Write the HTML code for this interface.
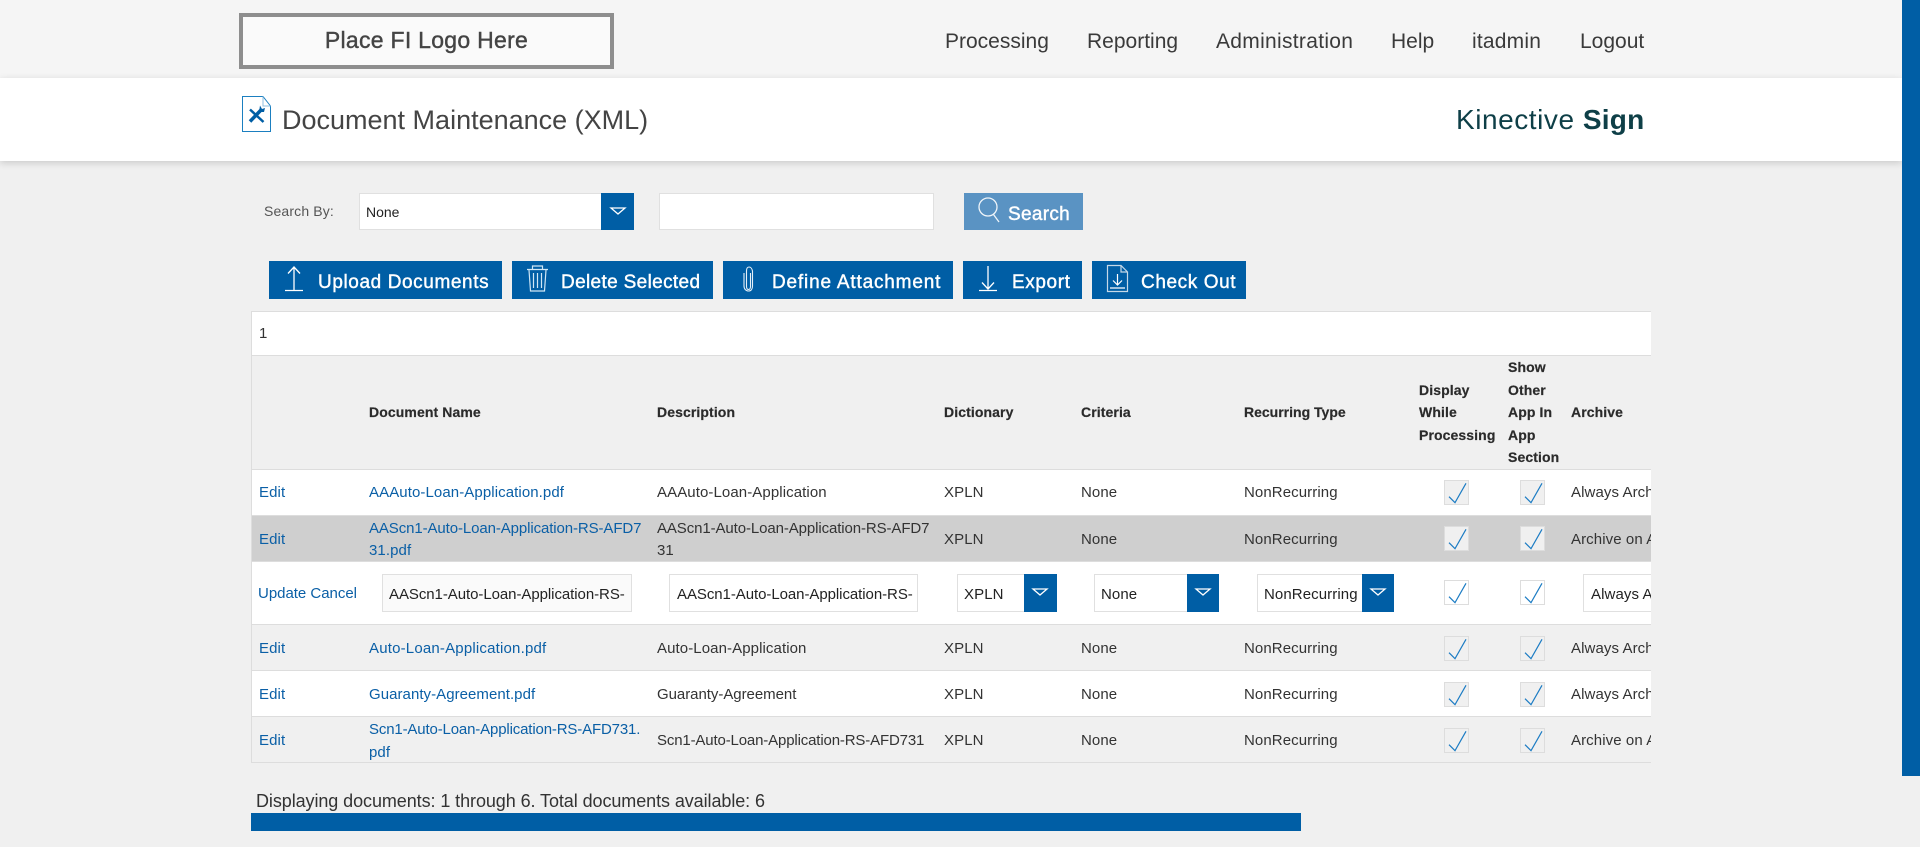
<!DOCTYPE html>
<html lang="en"><head><meta charset="utf-8"><title>Document Maintenance (XML)</title>
<style>
*{box-sizing:border-box}
html,body{margin:0;padding:0;width:1920px;height:847px;overflow:hidden;background:#f0f0f0;font-family:"Liberation Sans",Arial,sans-serif;color:#333}
.a{position:absolute}
.t{position:absolute;white-space:nowrap}
a{color:#0a5fa6;text-decoration:none}
#top{left:0;top:0;width:1902px;height:78px;background:#f5f5f5}
#sub{left:0;top:78px;width:1902px;height:83px;background:#fff;box-shadow:0 2px 7px rgba(0,0,0,.16)}
#sb{left:1902px;top:0;width:18px;height:776px;background:#005ea5}
#logo{left:239px;top:13px;width:375px;height:56px;border:4px solid #8e8e8e;background:#fafafa;text-align:center;line-height:47px;font-size:23px;letter-spacing:.28px;color:#444;-webkit-text-stroke:.4px #444}
.nav{top:30px;font-size:21px;line-height:24px;color:#3a3a3a}
.btn{position:absolute;top:261px;height:38px;background:#005ea5;color:#fff}
.btn span{position:absolute;top:0;line-height:44px;font-size:19px;white-space:nowrap;-webkit-text-stroke:.4px #fff;letter-spacing:.6px}
.btn svg,.ic{position:absolute;overflow:visible}
.inp{position:absolute;background:#fff;border:1px solid #e0e0e0;font-size:15px;color:#222;white-space:nowrap;overflow:hidden}
.ar{position:absolute;background:#005ea5}
#clip{left:0;top:0;width:1651px;height:847px;overflow:hidden}
.row{position:absolute;left:252px;width:1399px;font-size:15px;letter-spacing:.09px;color:#333}
.row .t{line-height:22px}
.c0{left:7px}.c1{left:117px}.c2{left:405px}.c3{left:692px}.c4{left:829px}.c5{left:992px}.c6{left:1319px}
.ln{position:absolute;left:251px;width:1400px;height:1px;background:#ddd}
.hd{font-weight:bold;font-size:14px;letter-spacing:.1px;color:#2b2b2b;-webkit-text-stroke:.2px #2b2b2b}
.cb{position:absolute;width:25px;height:25px;border:1px solid #ddd;background:#f0f0f0}
.cb.w{background:#fff}
.cb svg{position:absolute;left:-1px;top:-1px}
</style></head><body>

<div class="a" id="top"></div>
<div class="a" id="sub"></div>
<div class="a" id="sb"></div>
<div class="a" id="logo">Place FI Logo Here</div>
<span class="t nav" style="left:945px">Processing</span>
<span class="t nav" style="left:1087px">Reporting</span>
<span class="t nav" style="left:1216px;letter-spacing:.3px">Administration</span>
<span class="t nav" style="left:1391px">Help</span>
<span class="t nav" style="left:1472px;letter-spacing:.2px">itadmin</span>
<span class="t nav" style="left:1580px">Logout</span>

<svg class="ic" style="left:242px;top:96px" width="29" height="36" viewBox="0 0 29 36">
<path d="M.5.5H21L28.500 10V35.500H.5Z" fill="#fff" stroke="#1b7fc0" stroke-width="1"/>
<path d="M21 .5V10H28.500" fill="none" stroke="#8fbfe0" stroke-width="1"/>
<path d="M8 13.500L21.500 26" fill="none" stroke="#005ea5" stroke-width="2.500"/>
<path d="M8 25.500L19 14" fill="none" stroke="#005ea5" stroke-width="3.500"/>
<path d="M18 9.500L20 13L23 12L22 16L17 16Z" fill="#005ea5"/>
</svg>
<span class="t" style="left:282px;top:103px;font-size:27px;line-height:34px;color:#444">Document Maintenance (XML)</span>
<span class="t" style="left:1456px;top:103px;font-size:28px;line-height:34px;letter-spacing:.55px;color:#0e3f47">Kinective <b style="letter-spacing:.2px">Sign</b></span>

<span class="t" style="left:264px;top:201px;font-size:14px;line-height:20px;letter-spacing:.15px;color:#555">Search By:</span>
<div class="inp" style="left:359px;top:193px;width:275px;height:37px;padding-left:6px;font-size:14px;line-height:37px">None</div>
<div class="ar" style="left:601px;top:193px;width:33px;height:37px"><svg class="ic" style="left:9px;top:14px" width="16" height="8"><path d="M1 1H15L8 7Z" fill="none" stroke="#fff" stroke-width="1.300"/></svg></div>
<div class="inp" style="left:659px;top:193px;width:275px;height:37px"></div>
<div class="a" style="left:964px;top:193px;width:119px;height:37px;background:#5a93c3;color:#fff">
<svg class="ic" style="left:14px;top:4px" width="24" height="28" fill="none" stroke="#fff" stroke-width="1.300" opacity=".9"><circle cx="10" cy="10" r="9"/><path d="M15.500 17.500L21 25"/></svg>
<span class="t" style="left:44px;top:0;line-height:44px;font-size:19px;letter-spacing:.3px;-webkit-text-stroke:.4px #fff">Search</span></div>

<div class="btn" style="left:269px;width:233px">
<svg style="left:16px;top:5px" width="18" height="26" fill="none" stroke="#fff" stroke-width="1.300"><path d="M9 1V24M3 7.500L9 1L15 7.500M0 24.500H18"/></svg>
<span style="left:49px">Upload Documents</span></div>
<div class="btn" style="left:512px;width:201px">
<svg style="left:15px;top:4px" width="22" height="27" fill="none" stroke="#cfe6f5" stroke-width="1.200"><path d="M0 4.500H21M5.500 4V1H15.500V4M2 5L3.500 26H17.500L19 5M6.500 8V23M10.500 8V23M14.500 8V23"/></svg>
<span style="left:49px;letter-spacing:.35px">Delete Selected</span></div>
<div class="btn" style="left:723px;width:230px">
<svg style="left:20px;top:5px" width="11" height="26" fill="none" stroke="#e6f1f9" stroke-width="1.100"><path d="M7.500 7V20.500C7.500 22.500 6.500 23.500 5.500 23.500S3.500 22.500 3.500 20.500V5C3.500 2.500 4.500 1 6 1S9 2.500 9.500 5V20C9.500 23 8 25 5.500 25S1 23 1 20V7"/></svg>
<span style="left:49px;letter-spacing:.82px">Define Attachment</span></div>
<div class="btn" style="left:963px;width:119px">
<svg style="left:16px;top:5px" width="18" height="26" fill="none" stroke="#fff" stroke-width="1.300"><path d="M9 0V23M3 16.500L9 23L15 16.500M0 24.500H18"/></svg>
<span style="left:49px">Export</span></div>
<div class="btn" style="left:1092px;width:154px">
<svg style="left:15px;top:4px" width="21" height="27" fill="none" stroke="#fff" stroke-width="1.200"><path d="M.5.500H14L20.500 7V26.500H.5Z" stroke="#c4d8e8"/><path d="M14 .5V7H20.500" stroke="#c4d8e8"/><path d="M10.500 9V20M6 15.500L10.500 20L15 15.500M3 23H18"/></svg>
<span style="left:49px">Check Out</span></div>

<div class="a" id="clip">
<div class="a" style="left:251px;top:311px;width:1400px;height:44px;background:#fff"></div>
<div class="a" style="left:251px;top:355px;width:1400px;height:114px;background:#f0f0f0"></div>
<div class="ln" style="top:311px"></div>
<div class="ln" style="top:355px"></div>
<div class="ln" style="top:469px"></div>
<div class="ln" style="top:515px"></div>
<div class="ln" style="top:561px"></div>
<div class="ln" style="top:624px"></div>
<div class="ln" style="top:670px"></div>
<div class="ln" style="top:716px"></div>
<div class="ln" style="top:762px"></div>
<div class="a" style="left:251px;top:311px;width:1px;height:452px;background:#ddd"></div>

<span class="t" style="left:259px;top:324px;font-size:15px;line-height:20px">1</span>

<div class="row" style="top:355px;height:114px">
<span class="t hd c1" style="top:46px">Document Name</span>
<span class="t hd c2" style="top:46px">Description</span>
<span class="t hd c3" style="top:46px">Dictionary</span>
<span class="t hd c4" style="top:46px">Criteria</span>
<span class="t hd c5" style="top:46px;letter-spacing:0">Recurring Type</span>
<span class="t hd" style="left:1167px;top:24px">Display</span>
<span class="t hd" style="left:1167px;top:46px">While</span>
<span class="t hd" style="left:1167px;top:69px">Processing</span>
<span class="t hd" style="left:1256px;top:1px">Show</span>
<span class="t hd" style="left:1256px;top:24px">Other</span>
<span class="t hd" style="left:1256px;top:46px">App In</span>
<span class="t hd" style="left:1256px;top:69px">App</span>
<span class="t hd" style="left:1256px;top:91px">Section</span>
<span class="t hd c6" style="top:46px">Archive</span>
</div>

<div class="row" style="top:470px;height:45px;background:#fff">
<a class="t c0" style="top:12px">Edit</a>
<a class="t c1" style="top:12px">AAAuto-Loan-Application.pdf</a>
<span class="t c2" style="top:12px">AAAuto-Loan-Application</span>
<span class="t c3" style="top:12px">XPLN</span>
<span class="t c4" style="top:12px">None</span>
<span class="t c5" style="top:12px">NonRecurring</span>
<span class="t c6" style="top:12px">Always Archive</span>
<div class="cb" style="left:1192px;top:10px"><svg width="25" height="25" fill="none" stroke="#1c7cc4" stroke-width="1.200"><path d="M5 16.700L11 22.700L22 3.300"/></svg></div>
<div class="cb" style="left:1268px;top:10px"><svg width="25" height="25" fill="none" stroke="#1c7cc4" stroke-width="1.200"><path d="M5 16.700L11 22.700L22 3.300"/></svg></div>
</div>

<div class="row" style="top:516px;height:45px;background:#cfcfcf">
<a class="t c0" style="top:13px">Edit</a>
<a class="t c1" style="top:2px;letter-spacing:-.1px">AAScn1-Auto-Loan-Application-RS-AFD7</a>
<a class="t c1" style="top:24px">31.pdf</a>
<span class="t c2" style="top:2px;letter-spacing:-.1px">AAScn1-Auto-Loan-Application-RS-AFD7</span>
<span class="t c2" style="top:24px">31</span>
<span class="t c3" style="top:13px">XPLN</span>
<span class="t c4" style="top:13px">None</span>
<span class="t c5" style="top:13px">NonRecurring</span>
<span class="t c6" style="top:13px">Archive on Approval</span>
<div class="cb" style="left:1192px;top:10px"><svg width="25" height="25" fill="none" stroke="#1c7cc4" stroke-width="1.200"><path d="M5 16.700L11 22.700L22 3.300"/></svg></div>
<div class="cb" style="left:1268px;top:10px"><svg width="25" height="25" fill="none" stroke="#1c7cc4" stroke-width="1.200"><path d="M5 16.700L11 22.700L22 3.300"/></svg></div>
</div>

<div class="row" style="top:562px;height:62px;background:#fff">
<a class="t" style="left:6px;top:21px;letter-spacing:-.02px">Update Cancel</a>
<div class="inp" style="left:130px;top:12px;width:250px;height:38px;background:#fafafa;padding-left:6px;line-height:40px;letter-spacing:-.06px">AAScn1-Auto-Loan-Application-RS-</div>
<div class="inp" style="left:417px;top:12px;width:249px;height:38px;padding-left:7px;line-height:40px;letter-spacing:-.06px">AAScn1-Auto-Loan-Application-RS-</div>
<div class="inp" style="left:705px;top:12px;width:100px;height:38px;padding-left:6px;line-height:40px">XPLN</div>
<div class="ar" style="left:772px;top:12px;width:33px;height:38px"><svg class="ic" style="left:8px;top:14px" width="16" height="8"><path d="M1 1H15L8 7Z" fill="none" stroke="#fff" stroke-width="1.300"/></svg></div>
<div class="inp" style="left:842px;top:12px;width:125px;height:38px;padding-left:6px;line-height:40px">None</div>
<div class="ar" style="left:935px;top:12px;width:32px;height:38px"><svg class="ic" style="left:8px;top:14px" width="16" height="8"><path d="M1 1H15L8 7Z" fill="none" stroke="#fff" stroke-width="1.300"/></svg></div>
<div class="inp" style="left:1005px;top:12px;width:137px;height:38px;padding-left:6px;line-height:40px">NonRecurring</div>
<div class="ar" style="left:1110px;top:12px;width:32px;height:38px"><svg class="ic" style="left:8px;top:14px" width="16" height="8"><path d="M1 1H15L8 7Z" fill="none" stroke="#fff" stroke-width="1.300"/></svg></div>
<div class="cb w" style="left:1192px;top:18px"><svg width="25" height="25" fill="none" stroke="#1c7cc4" stroke-width="1.200"><path d="M5 16.700L11 22.700L22 3.300"/></svg></div>
<div class="cb w" style="left:1268px;top:18px"><svg width="25" height="25" fill="none" stroke="#1c7cc4" stroke-width="1.200"><path d="M5 16.700L11 22.700L22 3.300"/></svg></div>
<div class="inp" style="left:1331px;top:12px;width:120px;height:38px;padding-left:7px;line-height:40px">Always Archive</div>
</div>

<div class="row" style="top:625px;height:45px">
<a class="t c0" style="top:13px">Edit</a>
<a class="t c1" style="top:13px;letter-spacing:.19px">Auto-Loan-Application.pdf</a>
<span class="t c2" style="top:13px">Auto-Loan-Application</span>
<span class="t c3" style="top:13px">XPLN</span>
<span class="t c4" style="top:13px">None</span>
<span class="t c5" style="top:13px">NonRecurring</span>
<span class="t c6" style="top:13px">Always Archive</span>
<div class="cb" style="left:1192px;top:11px"><svg width="25" height="25" fill="none" stroke="#1c7cc4" stroke-width="1.200"><path d="M5 16.700L11 22.700L22 3.300"/></svg></div>
<div class="cb" style="left:1268px;top:11px"><svg width="25" height="25" fill="none" stroke="#1c7cc4" stroke-width="1.200"><path d="M5 16.700L11 22.700L22 3.300"/></svg></div>
</div>

<div class="row" style="top:671px;height:45px;background:#fff">
<a class="t c0" style="top:13px">Edit</a>
<a class="t c1" style="top:13px;letter-spacing:.05px">Guaranty-Agreement.pdf</a>
<span class="t c2" style="top:13px;letter-spacing:-.04px">Guaranty-Agreement</span>
<span class="t c3" style="top:13px">XPLN</span>
<span class="t c4" style="top:13px">None</span>
<span class="t c5" style="top:13px">NonRecurring</span>
<span class="t c6" style="top:13px">Always Archive</span>
<div class="cb" style="left:1192px;top:11px"><svg width="25" height="25" fill="none" stroke="#1c7cc4" stroke-width="1.200"><path d="M5 16.700L11 22.700L22 3.300"/></svg></div>
<div class="cb" style="left:1268px;top:11px"><svg width="25" height="25" fill="none" stroke="#1c7cc4" stroke-width="1.200"><path d="M5 16.700L11 22.700L22 3.300"/></svg></div>
</div>

<div class="row" style="top:717px;height:45px">
<a class="t c0" style="top:13px">Edit</a>
<a class="t c1" style="top:2px;letter-spacing:-.15px">Scn1-Auto-Loan-Application-RS-AFD731.</a>
<a class="t c1" style="top:25px">pdf</a>
<span class="t c2" style="top:13px;letter-spacing:-.15px">Scn1-Auto-Loan-Application-RS-AFD731</span>
<span class="t c3" style="top:13px">XPLN</span>
<span class="t c4" style="top:13px">None</span>
<span class="t c5" style="top:13px">NonRecurring</span>
<span class="t c6" style="top:13px">Archive on Approval</span>
<div class="cb" style="left:1192px;top:11px"><svg width="25" height="25" fill="none" stroke="#1c7cc4" stroke-width="1.200"><path d="M5 16.700L11 22.700L22 3.300"/></svg></div>
<div class="cb" style="left:1268px;top:11px"><svg width="25" height="25" fill="none" stroke="#1c7cc4" stroke-width="1.200"><path d="M5 16.700L11 22.700L22 3.300"/></svg></div>
</div>
</div>

<span class="t" style="left:256px;top:790px;font-size:18px;line-height:22px;letter-spacing:-.08px;color:#333">Displaying documents: 1 through 6. Total documents available: 6</span>
<div class="a" style="left:251px;top:813px;width:1050px;height:18px;background:#005ea5"></div>
</body></html>
